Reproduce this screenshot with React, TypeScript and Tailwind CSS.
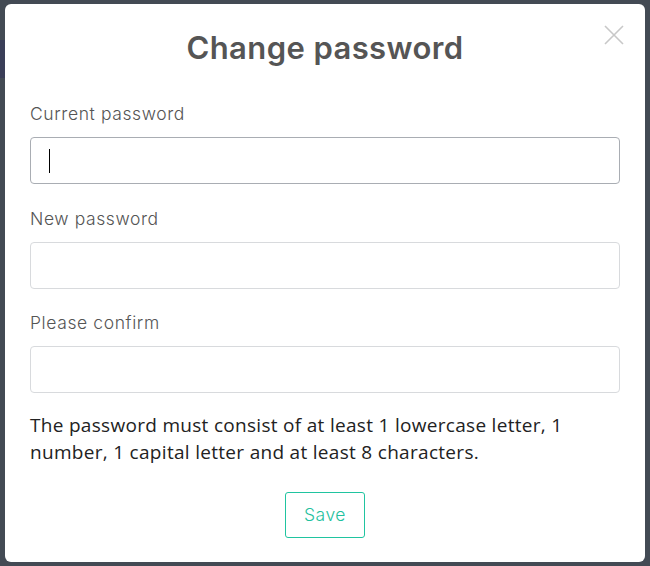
import React from "react";

export default function App() {
  return (
    <div className="w-[650px] h-[566px] bg-[#434a54] relative overflow-hidden pt-[4px] pl-[5px]">
      <div className="absolute left-0 top-[40px] w-[5px] h-[38px] bg-[#3a3e58]" />
      <div className="relative w-[640px] h-[558px] bg-white rounded-[6px] px-[25px] font-['Inter',sans-serif]">
        <button className="absolute left-[599px] top-[21px] w-[20px] h-[20px] text-[#c8c8c8]">
          <svg viewBox="0 0 20 20" width="20" height="20" fill="none" stroke="currentColor" strokeWidth="1.6">
            <path d="M1 1 L19 19 M19 1 L1 19" />
          </svg>
        </button>
        <h2 className="pt-[24px] h-[64px] leading-[40px] text-center text-[31px] font-semibold text-[#555555] tracking-[0.4px]">
          Change password
        </h2>
        <div className="mt-[34px] flex flex-col gap-[22.5px]">
          {[
            { label: "Current password", focus: true },
            { label: "New password", focus: false },
            { label: "Please confirm", focus: false },
          ].map((f) => (
            <div key={f.label} className="flex flex-col gap-[11px]">
              <label className="h-[24px] leading-[24px] text-[17.5px] tracking-[0.6px] font-light text-[#555555]">{f.label}</label>
              <div
                className={
                  f.focus
                    ? "h-[47px] rounded-[4px] border border-[#a9adb3] flex items-center pl-[18px]"
                    : "h-[47px] rounded-[4px] border border-[#d8dadd]"
                }
              >
                {f.focus && <div className="w-[1px] h-[24px] bg-black" />}
              </div>
            </div>
          ))}
        </div>
        <p className="mt-[19px] max-w-[545px] text-[19px] tracking-[0.3px] leading-[27px] text-[#222222] font-['Open_Sans',sans-serif]">
          The password must consist of at least 1 lowercase letter, 1 number, 1 capital letter and at least 8 characters.
        </p>
        <div className="mt-[26px] flex justify-center">
          <button className="w-[80px] h-[46px] rounded-[3px] border border-[#20c4a0] text-[#1fc19e] text-[17.5px] tracking-[0.5px] font-light">
            Save
          </button>
        </div>
      </div>
    </div>
  );
}
